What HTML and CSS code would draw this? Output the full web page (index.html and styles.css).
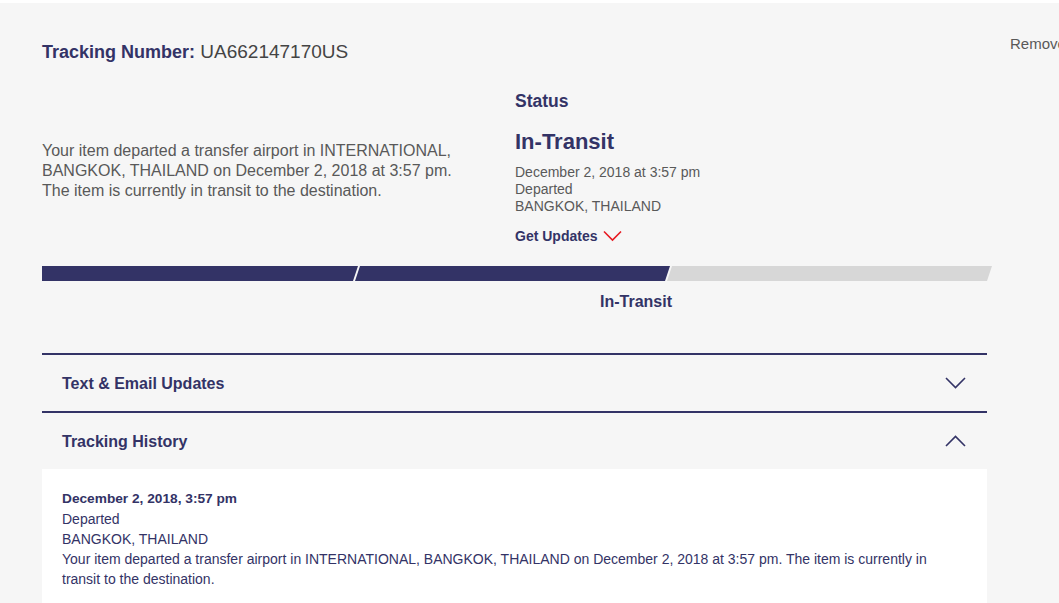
FILE: index.html
```html
<!DOCTYPE html>
<html lang="en">
<head>
  <meta charset="UTF-8">
  <meta name="viewport" content="width=device-width, initial-scale=1.0">
  <title>Tracking UA662147170US</title>
  <link rel="stylesheet" href="styles.css">
</head>
<body>
  <div class="page">
    <div class="tracking" id="tracking">
      <h1 class="tracking-number"><strong>Tracking Number:</strong> UA662147170US</h1>

      <div class="summary">
        <p class="summary-text">Your item departed a transfer airport in INTERNATIONAL, BANGKOK, THAILAND on December 2, 2018 at 3:57 pm. The item is currently in transit to the destination.</p>
        <div class="status">
          <h2>Status</h2>
          <div class="status-title">In-Transit</div>
          <div class="status-info">
            December 2, 2018 at 3:57 pm<br>
            Departed<br>
            BANGKOK, THAILAND
          </div>
          <a class="get-updates" href="#">Get Updates
            <svg width="19" height="12" viewBox="0 0 19 12"><path d="M1 1.5 L9.5 10 L18 1.5" fill="none" stroke="#e71921" stroke-width="1.6"/></svg>
          </a>
        </div>
      </div>

      <div class="progress">
        <svg class="progress-bar" width="950" height="15" viewBox="0 0 950 15">
          <polygon points="0,0 316,0 311,15 0,15" fill="#333366"/>
          <polygon points="318,0 628,0 623,15 313,15" fill="#333366"/>
          <polygon points="630,0 950,0 945,15 625,15" fill="#d7d7d7"/>
        </svg>
        <div class="progress-labels">
          <span></span>
          <span class="current">In-Transit</span>
          <span></span>
        </div>
      </div>

      <div class="accordion">
        <div class="accordion-head">
          <span>Text &amp; Email Updates</span>
          <svg width="21" height="12" viewBox="0 0 21 12"><path d="M1 1 L10.5 10.5 L20 1" fill="none" stroke="#333366" stroke-width="1.6"/></svg>
        </div>
        <div class="accordion-head">
          <span>Tracking History</span>
          <svg width="21" height="12" viewBox="0 0 21 12"><path d="M1 11 L10.5 1.5 L20 11" fill="none" stroke="#333366" stroke-width="1.6"/></svg>
        </div>
        <div class="history">
          <div class="history-date">December 2, 2018, 3:57 pm</div>
          <div>Departed</div>
          <div>BANGKOK, THAILAND</div>
          <div>Your item departed a transfer airport in INTERNATIONAL, BANGKOK, THAILAND on December 2, 2018 at 3:57 pm. The item is currently in transit to the destination.</div>
        </div>
      </div>
    </div>

    <div class="side">
      <a class="remove" href="#">Remove</a>
    </div>
  </div>
</body>
</html>
```

FILE: styles.css
```css
body {
  font-family: "Liberation Sans", Arial, sans-serif;
  margin: 0;
  background-color: #f6f6f6;
  border-top: 3px solid #fff;
  color: #333366;
  overflow: hidden;
}
.page {
  display: flex;
  padding: 38px 0 0 42px;
}
.tracking {
  width: 945px;
  flex-shrink: 0;
}
.side {
  padding: 0 0 0 23px;
  white-space: nowrap;
}
.remove {
  display: block;
  font-size: 15px;
  line-height: 16px;
  color: #595959;
  text-decoration: none;
  margin-top: -5px;
}
.tracking-number {
  margin: 0;
  font-size: 19px;
  line-height: 22px;
  font-weight: normal;
  color: #444;
}
.tracking-number strong {
  font-size: 18px;
  color: #333366;
}
.summary {
  display: grid;
  grid-template-columns: 473px 1fr;
  margin-top: 27px;
}
.summary-text {
  margin: 51px 0 0;
  width: 440px;
  font-size: 16px;
  line-height: 20px;
  color: #595959;
}
.status h2 {
  margin: 0;
  font-size: 17.5px;
  line-height: 22px;
}
.status-title {
  margin-top: 16px;
  font-size: 22px;
  line-height: 28px;
  font-weight: bold;
}
.status-info {
  margin-top: 8px;
  font-size: 14px;
  line-height: 17px;
  color: #595959;
}
.get-updates {
  display: inline-flex;
  align-items: center;
  gap: 6px;
  margin-top: 12px;
  font-size: 14px;
  line-height: 18px;
  font-weight: bold;
  color: #333366;
  text-decoration: none;
}
.progress {
  margin-top: 21px;
}
.progress-bar {
  display: block;
}
.progress-labels {
  display: grid;
  grid-template-columns: repeat(3, 1fr);
  margin-top: 11px;
  font-size: 16px;
  line-height: 20px;
  font-weight: bold;
}
.progress-labels .current {
  text-align: right;
}
.accordion {
  margin-top: 41px;
}
.accordion-head {
  display: flex;
  justify-content: space-between;
  align-items: center;
  height: 56px;
  padding: 0 21px 0 20px;
  border-top: 2px solid #333366;
  font-size: 16px;
  font-weight: bold;
}
.accordion-head span {
  padding-top: 2px;
}
.history {
  background-color: #fff;
  padding: 20px 20px 20px;
  font-size: 14px;
  line-height: 20px;
  color: #333366;
}
.history-date {
  font-size: 13.7px;
  font-weight: bold;
}
```
